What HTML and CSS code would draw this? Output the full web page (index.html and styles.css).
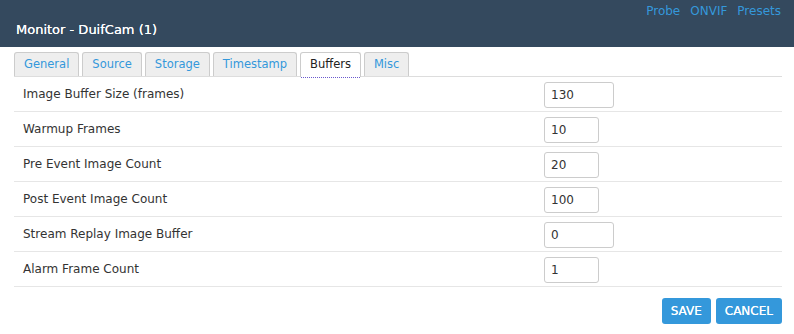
FILE: index.html
```html
<!DOCTYPE html>
<html>
<head>
<meta charset="utf-8">
<link rel="stylesheet" href="styles.css">
</head>
<body>
<header class="topbar">
  <nav class="toplinks">
    <a href="#">Probe</a>
    <a href="#">ONVIF</a>
    <a href="#">Presets</a>
  </nav>
  <h1 class="title">Monitor - DuifCam (1)</h1>
</header>
<main class="content">
  <ul class="tabs">
    <li class="tab">General</li>
    <li class="tab">Source</li>
    <li class="tab">Storage</li>
    <li class="tab">Timestamp</li>
    <li class="tab active">Buffers</li>
    <li class="tab">Misc</li>
  </ul>
  <div class="rows">
    <div class="row"><span class="label">Image Buffer Size (frames)</span><input class="field wide" value="130"></div>
    <div class="row"><span class="label">Warmup Frames</span><input class="field" value="10"></div>
    <div class="row"><span class="label">Pre Event Image Count</span><input class="field" value="20"></div>
    <div class="row"><span class="label">Post Event Image Count</span><input class="field" value="100"></div>
    <div class="row"><span class="label">Stream Replay Image Buffer</span><input class="field wide" value="0"></div>
    <div class="row"><span class="label">Alarm Frame Count</span><input class="field" value="1"></div>
  </div>
  <div class="actions">
    <button class="btn">SAVE</button>
    <button class="btn">CANCEL</button>
  </div>
</main>
</body>
</html>
```
FILE: styles.css
```css
html, body {
  margin: 0;
  padding: 0;
  background: #fff;
  font-family: "DejaVu Sans", Verdana, sans-serif;
  color: #333;
}
.topbar {
  background: #34495e;
  height: 47px;
  padding: 0 13px 0 16px;
  display: flex;
  flex-direction: column;
}
.toplinks {
  display: flex;
  justify-content: flex-end;
  gap: 10px;
  padding-top: 3px;
}
.toplinks a {
  color: #3498db;
  text-decoration: none;
  font-size: 12px;
  line-height: 16px;
}
.title {
  margin: 1px 0 0 0;
  color: #fff;
  font-size: 13px;
  font-weight: normal;
  line-height: 20px;
  text-shadow: 0 0 0.3px #fff;
}
.content {
  padding: 5px 12px 0 14px;
}
.tabs {
  list-style: none;
  margin: 0;
  padding: 0;
  display: flex;
  gap: 3px;
  height: 24px;
  border-bottom: 1px solid #ddd;
}
.tab {
  background: #eee;
  border: 1px solid #ccc;
  border-bottom: none;
  border-radius: 3px 3px 0 0;
  padding: 0 9px;
  font-size: 11.5px;
  line-height: 23px;
  color: #3498db;
}
.tab.active {
  background: #fff;
  color: #222;
  border-color: #ccc;
  position: relative;
  height: 24px;
}
.tab.active::after {
  content: "";
  position: absolute;
  left: 0;
  right: 0;
  bottom: -1px;
  border-bottom: 1px dotted #6a5acd;
}
.rows {
  display: flex;
  flex-direction: column;
}
.row {
  display: grid;
  grid-template-columns: 530px auto;
  align-items: center;
  height: 34px;
  border-bottom: 1px solid #e6e6e6;
}
.label {
  padding-left: 9px;
  font-size: 12px;
  color: #333;
}
.field {
  box-sizing: border-box;
  width: 55px;
  height: 26px;
  border: 1px solid #ccc;
  border-radius: 3px;
  padding: 0 6px;
  font-family: inherit;
  font-size: 12px;
  color: #333;
  margin-top: 1px;
}
.field.wide {
  width: 70px;
}
.actions {
  display: flex;
  justify-content: flex-end;
  gap: 5px;
  padding-top: 11px;
}
.btn {
  background: #3498db;
  color: #fff;
  border: none;
  border-radius: 3px;
  height: 26px;
  padding: 0 9px;
  font-family: inherit;
  font-size: 12px;
  font-weight: normal;
  text-shadow: 0 0 0.4px #fff;
}
```
